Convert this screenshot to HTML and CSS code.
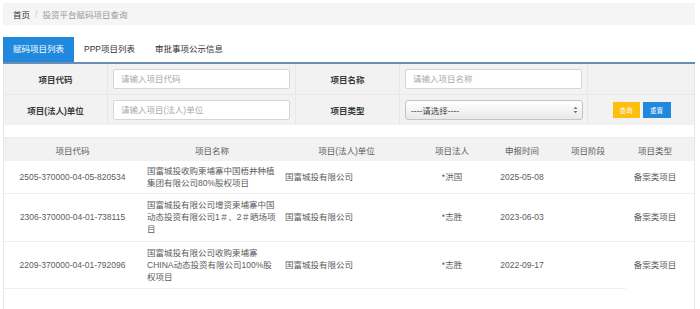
FILE: index.html
```html
<!DOCTYPE html>
<html lang="zh-CN">
<head>
<meta charset="utf-8">
<title>投资平台赋码项目查询</title>
<link rel="stylesheet" href="styles.css">
</head>
<body>
<div class="page">
  <div class="breadcrumb">
    <span class="home">首页</span><span class="sep">/</span><span class="current">投资平台赋码项目查询</span>
  </div>

  <div class="tabs">
    <div class="tab active">赋码项目列表</div>
    <div class="tab">PPP项目列表</div>
    <div class="tab">审批事项公示信息</div>
  </div>

  <div class="box">
    <div class="form">
      <div class="cell label">项目代码</div>
      <div class="cell"><input class="input" type="text" placeholder="请输入项目代码"></div>
      <div class="cell label">项目名称</div>
      <div class="cell"><input class="input" type="text" placeholder="请输入项目名称"></div>
      <div class="cell last"></div>

      <div class="cell label">项目(法人)单位</div>
      <div class="cell"><input class="input" type="text" placeholder="请输入项目(法人)单位"></div>
      <div class="cell label">项目类型</div>
      <div class="cell">
        <div class="select"><span>----请选择----</span>
          <svg class="arrows" width="5" height="8" viewBox="0 0 5 8"><path d="M0.5 3 L2.5 0.8 L4.5 3 Z M0.5 5 L2.5 7.2 L4.5 5 Z" fill="#777"/></svg>
        </div>
      </div>
      <div class="cell last buttons">
        <button class="btn btn-yellow">查询</button>
        <button class="btn btn-blue">重置</button>
      </div>
    </div>

    <div class="spacer"></div>

    <table class="grid">
      <colgroup>
        <col class="c1"><col class="c2"><col class="c3"><col class="c4"><col class="c5"><col class="c6"><col class="c7">
      </colgroup>
      <thead>
        <tr class="head">
          <th>项目代码</th><th>项目名称</th><th>项目(法人)单位</th><th>项目法人</th><th>申报时间</th><th>项目阶段</th><th class="type">项目类型</th>
        </tr>
      </thead>
      <tbody>
        <tr class="r1">
          <td>2505-370000-04-05-820534</td>
          <td class="left name">国富城投收购柬埔寨中国梧井种植<br>集团有限公司80%股权项目</td>
          <td class="left unit">国富城投有限公司</td>
          <td>*洪国</td>
          <td>2025-05-08</td>
          <td></td>
          <td class="type">备案类项目</td>
        </tr>
        <tr class="r2">
          <td>2306-370000-04-01-738115</td>
          <td class="left name">国富城投有限公司增资柬埔寨中国<br>动态投资有限公司1＃、2＃晒场项<br>目</td>
          <td class="left unit">国富城投有限公司</td>
          <td>*志胜</td>
          <td>2023-06-03</td>
          <td></td>
          <td class="type">备案类项目</td>
        </tr>
        <tr class="r3">
          <td class="b">2209-370000-04-01-792096</td>
          <td class="left name b">国富城投有限公司收购柬埔寨<br>CHINA动态投资有限公司100%股<br>权项目</td>
          <td class="left unit b">国富城投有限公司</td>
          <td class="b">*志胜</td>
          <td class="b">2022-09-17</td>
          <td class="b"></td>
          <td class="type">备案类项目</td>
        </tr>
      </tbody>
    </table>
  </div>
</div>
</body>
</html>
```
FILE: styles.css
```css
* { box-sizing: border-box; }

html, body {
  margin: 0;
  padding: 0;
  background: #ffffff;
}

body {
  font-family: "Liberation Sans", "Noto Sans CJK SC", sans-serif;
  font-size: 8.5px;
  color: #333;
}

.page {
  width: 692px;
  margin-left: 3px;
  padding-top: 3px;
}

/* breadcrumb */
.breadcrumb {
  height: 22px;
  background: #f5f5f5;
  display: flex;
  align-items: center;
  padding-left: 10px;
}
.breadcrumb .home { color: #333; }
.breadcrumb .sep { color: #c8c8c8; margin: 0 5px; }
.breadcrumb .current { color: #999; }

/* tabs */
.tabs {
  margin-top: 12px;
  display: flex;
  border-bottom: 2px solid #6c8db2;
}
.tab {
  height: 25px;
  line-height: 25px;
  padding: 0 10px;
  color: #333;
}
.tab.active {
  background: #2189dd;
  color: #fff;
}

/* box */
.box {
  border-left: 1px solid #e6e6e6;
  border-right: 1px solid #e6e6e6;
  min-height: 245px;
}

.form {
  display: grid;
  grid-template-columns: 104px 188px 104px 188px 1fr;
  grid-template-rows: 31px 30px;
  background: #f2f2f2;
}
.cell {
  border-right: 1px solid #e8e8e8;
  border-bottom: 1px solid #e8e8e8;
  display: flex;
  align-items: center;
}
.cell.last { border-right: none; }
.form .cell:nth-child(n+6) { border-bottom: none; }
.label {
  justify-content: center;
  font-weight: bold;
  color: #3a3a3a;
}

.input {
  display: block;
  margin-left: 5px;
  width: 177px;
  height: 20px;
  border: 1px solid #d6d6d6;
  border-radius: 2px;
  background: #fff;
  padding: 0 0 0 7px;
  font-family: "Liberation Sans", "Noto Sans CJK SC", sans-serif;
  font-size: 8.5px;
  color: #333;
  outline: none;
}
.input::placeholder { color: #a9a9a9; }

.select {
  margin-left: 5px;
  width: 178px;
  height: 20px;
  border: 1px solid #c4c4c4;
  border-radius: 3px;
  background: linear-gradient(#ffffff, #e9e9e9);
  display: flex;
  align-items: center;
  justify-content: space-between;
  padding: 0 4px 0 5px;
  color: #444;
}
.arrows { display: block; }

.buttons {
  justify-content: center;
  gap: 3px;
  padding-left: 1px;
}
.btn {
  width: 27px;
  height: 16px;
  border: none;
  padding: 0;
  color: #fff;
  font-family: "Liberation Sans", "Noto Sans CJK SC", sans-serif;
  font-size: 6.5px;
}
.btn-yellow { background: #fcbf0f; }
.btn-blue { background: #2189dd; width: 28px; }

.spacer {
  height: 13px;
  border-bottom: 1px solid #ececec;
  background: #fff;
}

/* table */
.grid {
  width: 100%;
  border-collapse: collapse;
  table-layout: fixed;
  color: #5c5c5c;
}
.c1 { width: 137px; }
.c2 { width: 142px; }
.c3 { width: 127px; }
.c4 { width: 84px; }
.c5 { width: 56px; }
.c6 { width: 76px; }
.c7 { width: 68px; }

.grid th {
  font-weight: normal;
  background: #f2f2f2;
  text-align: center;
  color: #5c5c5c;
  padding: 0;
}
.head { height: 23px; }

.grid td {
  text-align: center;
  padding: 0;
  line-height: 12px;
  border-bottom: 1px solid #efefef;
}
.grid .type { padding-right: 10px; }
.grid td.left { text-align: left; }
.grid td.name { padding-left: 6px; }
.grid td.unit { padding-left: 2px; }
.grid .r3 td { border-bottom: none; }
.grid .r3 td.b { border-bottom: 1px solid #efefef; }

.r1 { height: 32px; }
.r2 { height: 48px; }
.r3 { height: 47px; }
```
